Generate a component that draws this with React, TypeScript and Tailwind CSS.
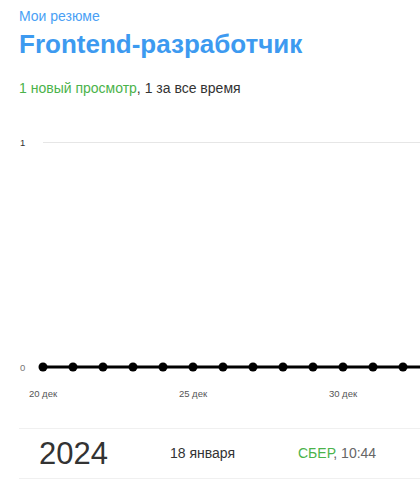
const points = Array.from({ length: 14 }, (_, i) => 24 + i * 30);

const ticks = [
  { x: 24, label: '20 дек' },
  { x: 174, label: '25 дек' },
  { x: 324, label: '30 дек' },
];

function ViewsChart() {
  return (
    <svg width="401" height="275" viewBox="0 0 401 275" className="block">
      {/* grid line for max value */}
      <line x1="24" y1="12.5" x2="401" y2="12.5" stroke="#e6e6e6" strokeWidth="1" />
      <text x="1" y="16" fontSize="9.5" fill="#333" fontFamily="'Liberation Sans', Arial, sans-serif">
        1
      </text>
      <text x="1" y="241" fontSize="9.5" fill="#777" fontFamily="'Liberation Sans', Arial, sans-serif">
        0
      </text>

      <line x1="24" y1="237" x2="401" y2="237" stroke="#000" strokeWidth="3" />
      {points.map((x) => (
        <circle key={x} cx={x} cy="237" r="4.5" fill="#000" />
      ))}

      {ticks.map((t) => (
        <text
          key={t.label}
          x={t.x}
          y="267"
          fontSize="9.5"
          fill="#555"
          textAnchor="middle"
          fontFamily="'Liberation Sans', Arial, sans-serif"
        >
          {t.label}
        </text>
      ))}
    </svg>
  );
}

export default function App() {
  return (
    <div className="w-[420px] h-[491px] overflow-hidden bg-white pl-[19px] font-['Liberation_Sans',Arial,sans-serif]">
      <div className="pt-[7px] text-[14px] leading-[18px] text-[#4a9ff5]">Мои резюме</div>
      <h1 className="mt-[3px] text-[26px] leading-[32px] font-bold text-[#3d9af0]">
        Frontend-разработчик
      </h1>
      <p className="mt-[19px] text-[14px] leading-[18px] text-[#333]">
        <span className="text-[#4bb34b]">1 новый просмотр</span>, 1 за все время
      </p>

      <div className="mt-[33px]">
        <ViewsChart />
      </div>

      <div className="mt-[23px] flex items-center h-[51px] border-y border-[#f0f0f0] pl-[20px]">
        <div className="w-[131px] text-[31px] leading-none text-[#333]">2024</div>
        <div className="w-[128px] text-[14px] text-[#333]">18 января</div>
        <div className="text-[14px] text-[#666]">
          <span className="text-[#4bb34b]">СБЕР</span>, 10:44
        </div>
      </div>
    </div>
  );
}
